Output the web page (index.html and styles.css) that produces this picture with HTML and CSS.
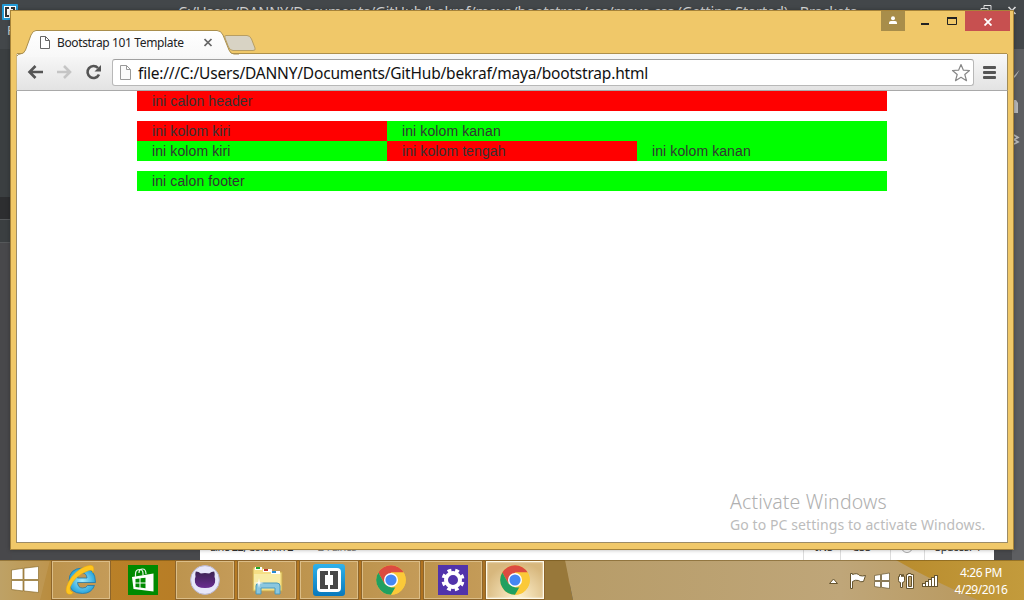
FILE: index.html
```html
<!DOCTYPE html>
<html lang="en">
<head>
<meta charset="utf-8">
<title>Bootstrap 101 Template</title>
<link rel="stylesheet" href="styles.css">
</head>
<body>
<div class="desktop">
  <section class="editor">
    <header class="editor-head">
      <svg class="editor-logo" width="16" height="16" viewBox="0 0 16 16"><rect width="16" height="16" rx="1" fill="#239bd8"/><rect x="2" y="2" width="12" height="12" fill="#fff"/><path d="M7 4H4v8h3M9 4h3v8H9" fill="none" stroke="#333" stroke-width="2"/></svg>
      <span class="editor-title">C:/Users/DANNY/Documents/GitHub/bekraf/maya/bootstrap/css/maya.css (Getting Started) - Brackets</span>
      <svg class="editor-controls" width="40" height="16" viewBox="0 0 40 16" fill="none" stroke="#e4e4e4"><path d="M4 9V5.500h7V12M1 8.500h7V14H1z"/><path d="M28.500 7l7 7m0-7l-7 7" stroke-width="1.600"/></svg>
      <span class="editor-menu">File</span>
    </header>
    <aside class="editor-side"><div class="side-selected"></div><div class="side-row"></div></aside>
    <aside class="editor-tools">
      <svg width="12" height="110" viewBox="0 0 12 110"><path d="M2 27l5.500-6-3.500 6-2 2" fill="#b6b7b8"/><path d="M2 51h2l2 3v10H2z" fill="#b6b7b8"/><path d="M2 86l4 2.500-4 2 4 2.500-4 2" fill="none" stroke="#b6b7b8" stroke-width="1.600"/></svg>
    </aside>
    <footer class="editor-status"><span class="cursor-pos">Line 22, Column 2</span><span class="lines">— 24 Lines</span><span class="st ins">INS</span><span class="st css">CSS</span><span class="st lint"><i></i></span><span class="st spaces">Spaces: 4</span></footer>
  </section>

  <section class="browser">
    <header class="titlebar">
      <div class="tab">
        <svg class="tab-shape" width="245" height="27" viewBox="0 0 245 27"><defs><linearGradient id="tg" x2="0" y2="1"><stop stop-color="#fff"/><stop offset="1" stop-color="#f8f8f8"/></linearGradient></defs><path d="M0 27v-1Q1 24 3 24 7 24 8.500 20L14 5Q16 .5 19 .5H200Q204 .5 206 5L212 20Q213.500 24 217 24H222V27z" fill="url(#tg)"/><path d="M0 26Q1 24 3 24 7 24 8.500 20L14 5Q16 .5 19 .5H200Q204 .5 206 5L212 20Q213.500 24 217 24H222" fill="none" stroke="#a98e4d"/><path d="M209 5.500H230Q233 5.500 234.500 9L238 18Q239 20.500 236 20.500H216Q213 20.500 211.500 17L208 8Q207 5.500 209 5.500z" fill="#d8d3c4" stroke="#b79e63"/></svg>
        <div class="tab-label">
          <svg width="12" height="15" viewBox="0 0 12 15" fill="#fff" stroke="#666"><path d="M1.500 1.500h5l4 4v8h-9zM6.500 1.500v4h4"/></svg>
          <span class="tab-title">Bootstrap 101 Template</span>
          <svg class="tab-close" width="9" height="9" viewBox="0 0 9 9"><path d="M.5 1l7 7m0-7l-7 7" stroke="#666" stroke-width="1.700"/></svg>
        </div>
      </div>
      <div class="window-controls">
        <span class="user"><svg width="8" height="9" viewBox="0 0 8 9" fill="#fff"><circle cx="4" cy="2.200" r="2"/><path d="M0 8V7q0-2 2-2h4q2 0 2 2v1z"/></svg></span>
        <svg class="minmax" width="60" height="20" viewBox="0 0 60 20"><path d="M16 12h8v2h-8z" fill="#222"/><path d="M42.500 6.500h9v7h-9z" fill="none" stroke="#222"/><path d="M42 6h10v2H42z" fill="#222"/></svg>
        <span class="close"><svg width="8" height="8" viewBox="0 0 8 8"><path d="M.5.500l7 7m0-7l-7 7" stroke="#fff" stroke-width="1.800"/></svg></span>
      </div>
    </header>
    <nav class="toolbar">
      <svg class="nav" width="94" height="36" viewBox="0 0 94 36" fill="none" stroke-width="2.600"><path d="M26 18H13M18.500 12l-6 6 6 6" stroke="#555"/><path d="M40 18h12M47 12l6 6-6 6" stroke="#c5c5c5"/><path d="M82 20.500a6 6 0 1 1-1-6.500" stroke="#555"/><path d="M84 11v6.500h-6.500z" fill="#555"/></svg>
      <div class="address">
        <svg width="12" height="15" viewBox="0 0 12 15" fill="#fafafa" stroke="#999"><path d="M1.500.5h6l4 4v10h-10zM7.500.5v4h4"/></svg>
        <span class="url">file:///C:/Users/DANNY/Documents/GitHub/bekraf/maya/bootstrap.html</span>
        <svg class="star" width="20" height="20" viewBox="0 0 20 20"><path d="M10 1.500l2.400 5.700 6.100.3-4.700 4 1.700 6.200L10 14.300l-5.500 3.400 1.700-6.200-4.700-4 6.100-.3z" fill="#fff" stroke="#888" stroke-width="1.200" stroke-linejoin="round"/></svg>
      </div>
      <svg class="burger" width="13" height="13" viewBox="0 0 13 13" fill="#555"><rect width="13" height="3" rx="1"/><rect y="5" width="13" height="3" rx="1"/><rect y="10" width="13" height="3" rx="1"/></svg>
    </nav>
    <main class="page">
      <div class="container">
        <div class="cell red gap">ini calon header</div>
        <div class="row two"><div class="cell red">ini kolom kiri</div><div class="cell green">ini kolom kanan</div></div>
        <div class="row three gap"><div class="cell green">ini kolom kiri</div><div class="cell red">ini kolom tengah</div><div class="cell green">ini kolom kanan</div></div>
        <div class="cell green">ini calon footer</div>
      </div>
    </main>
  </section>

  <aside class="activate"><div class="activate-title">Activate Windows</div><div class="activate-sub">Go to PC settings to activate Windows.</div></aside>

  <footer class="taskbar">
    <svg class="wallpaper" width="1024" height="40" viewBox="0 0 1024 40"><defs><linearGradient id="w1"><stop stop-color="#b99a59"/><stop offset=".08" stop-color="#b98e42"/><stop offset=".16" stop-color="#ba8128"/><stop offset=".8" stop-color="#b0711f"/><stop offset="1" stop-color="#98783a"/></linearGradient><linearGradient id="w2"><stop stop-color="#b79c68"/><stop offset=".6" stop-color="#bfa679"/><stop offset="1" stop-color="#b79556"/></linearGradient><linearGradient id="w3"><stop stop-color="#b98c2e"/><stop offset="1" stop-color="#c39b3c"/></linearGradient></defs><path d="M0 0h570v40H0z" fill="url(#w1)"/><path d="M0 0h50L40 40H0z" fill="#fff" opacity=".08"/><path d="M545 0h20l8 40h-28z" fill="#98783a"/><path d="M565 0h459v40H573z" fill="url(#w2)"/><path d="M896 0h128v40h-46Q930 20 896 0z" fill="url(#w3)"/><path d="M0 .5h1024" stroke="#6b4d13" opacity=".5"/></svg>
    <div class="start"><svg width="28" height="28" viewBox="0 0 28 28" fill="#fff" stroke="#8d6e2e" stroke-width=".7"><path d="M.5 4L12 2.300v11.200H.5zM13 2.200L27.500.5v13H13zM.5 14.500H12V25L.5 23.500zM13 14.500h14.500v12L13 25z"/></svg></div>
    <div class="apps">
      <div class="app"><svg width="32" height="32" viewBox="0 0 32 32"><defs><radialGradient id="ie"><stop stop-color="#a8edff"/><stop offset="1" stop-color="#2aa5db"/></radialGradient></defs><path d="M30.500 18.500H12.500q.5 5.500 5 5.500 4 0 5-2.500h7q-3 8-12 8Q4 29.500 4 17T17.500 4q13 0 13 14.500zM12.500 14H22q-.5-5-4.800-5-4.200 0-4.700 5z" fill="url(#ie)" stroke="#2377a7" stroke-width=".8"/><path d="M7 30Q-.5 32 1.500 23 5 11.500 16 4.500 27-1 28.500 3q.8 2-.5 6 0-4.500-6.500-1.500Q10 12 5.500 22.500q-1.500 5 2.500 5.500z" fill="#ffc51e" stroke="#e5a40b" stroke-width=".5"/></svg></div>
      <div class="app plain"><svg width="30" height="30" viewBox="0 0 30 30"><path d="M0 0h30v30H0z" fill="#008a00"/><path d="M4 12L25.500 8.500v18L5.500 24z" fill="#fff"/><path d="M7.500 12V9q0-4.500 4-4.500 3.500 0 3.500 4v2M11 8q0-4 3.500-4Q18 4 18 9" fill="none" stroke="#e8f5e8" stroke-width="1.200"/><path d="M7.500 14l4-.5v4h-4zM12.500 13.300l5-.6v4.800h-5zM7.500 18.500h4v4l-4-.5zM12.500 18.500h5v4.800l-5-.7z" fill="#008a00"/></svg></div>
      <div class="app"><svg width="30" height="30" viewBox="0 0 30 30"><defs><linearGradient id="cat" x2="0" y2="1"><stop stop-color="#3b2352"/><stop offset="1" stop-color="#6a2c91"/></linearGradient></defs><circle cx="15" cy="15" r="14.400" fill="#e7e7fa" stroke="#b9b6cf"/><path d="M5.800 6.500q3 .2 5 2 4.200-.9 8.400 0 2-1.800 5-2 1 2.800.3 5.300 1.200 2.200.5 5.700Q23.700 23 15 23T5 17.500q-.7-3.500.5-5.700-.7-2.500.3-5.300z" fill="url(#cat)"/></svg></div>
      <div class="app"><svg width="32" height="30" viewBox="0 0 32 30"><path d="M2 4q0-2 2-2h7l2 3h7l2 2h9v19H2z" fill="#f5df85" stroke="#c9a94c"/><path d="M3 9h26v15H3z" fill="#f8eca5"/><path d="M4 2h7v3H4z" fill="#fff"/><path d="M5 2h4v2H5z" fill="#20a62b"/><path d="M12 4h9v3h-9z" fill="#fff"/><path d="M13 4h4v2h-4z" fill="#bd3428"/><path d="M20 6h9v3h-9z" fill="#fff"/><path d="M21 6h4v2h-4z" fill="#268cd2"/><path d="M5 29V21q0-3 3-3h18q3 0 3 3v8h-5v-6H10v6z" fill="#8bc7df" stroke="#4b9abc"/><path d="M8 13l.8 4.200 4.200.8-4.200.8L8 23l-.8-4.200L3 18l4.200-.8z" fill="#fff"/></svg></div>
      <div class="app"><svg width="32" height="32" viewBox="0 0 32 32"><defs><linearGradient id="br" x2="0" y2="1"><stop stop-color="#30b2eb"/><stop offset="1" stop-color="#0878bb"/></linearGradient></defs><rect width="32" height="32" rx="3" fill="url(#br)"/><rect x="4" y="4" width="24" height="24" rx="4" fill="#fff"/><path d="M7 7h8v4h-3v10h3v4H7zM17 7h8v18h-8v-4h3V11h-3z" fill="#484848"/></svg></div>
      <div class="app"><svg width="30" height="30" viewBox="0 0 30 30"><g id="chrome"><circle cx="15" cy="15" r="14.700" fill="#fbc939"/><path d="M2.300 7.600A14.700 14.700 0 0 1 27.700 7.600H15L8.600 18.700z" fill="#dc4b40"/><path d="M2.300 7.600L8.600 18.700 15 22.400h6.400L15 29.700A14.700 14.700 0 0 1 2.300 7.600z" fill="#20a060"/><path d="M21.400 18.700L15 29.700A14.700 14.700 0 0 0 27.700 7.600H15z" fill="#fbc939"/><circle cx="15" cy="15" r="7" fill="#fff"/><circle cx="15" cy="15" r="5.600" fill="#4587f3"/></g></svg></div>
      <div class="app"><svg width="30" height="30" viewBox="0 0 30 30"><path d="M0 0h30v30H0z" fill="#5133ab"/><circle cx="15" cy="15" r="7" fill="none" stroke="#fff" stroke-width="4"/><circle cx="15" cy="15" r="9.800" fill="none" stroke="#fff" stroke-width="3.400" stroke-dasharray="3.850 3.850" stroke-dashoffset="-1.900"/></svg></div>
      <div class="app active"><svg width="30" height="30" viewBox="0 0 30 30"><use href="#chrome"/></svg></div>
    </div>
    <div class="tray">
      <svg width="112" height="20" viewBox="0 0 112 20" fill="#fff" stroke="#65542e"><path d="M.5 12.500L4.500 8l4 4.500z"/><path d="M21.500 2.500h2v1q5-2 7 1 3 1 6 0l-2 6q-3 1-5-1-3-1-6 1v7h-2z"/><path d="M45.500 4.500l6-1v6h-6zM52.500 3.300l8-1.300v7.500h-8zM45.500 10.500h6v6l-6-1zM52.500 10.500h8v7l-8-1.200z" stroke-width=".7"/><path d="M70.500 3.500v2h-1v4q0 2 2 2v5h2v-5q2 0 2-2v-4h-1v-2h-1v2h-1v-2zM77.500 3.500h1.500v-1h3v1h2.500v14h-7zM79.500 5.500v10h3v-10z" fill-rule="evenodd"/><path d="M93 12h3v-2h3V8h3V6h3V4h4v12H93z" fill="#65542e" stroke="none"/><path d="M94 13h2v2h-2zM97 11h2v4h-2zM100 9h2v6h-2zM103 7h2v8h-2zM106 5h2v10h-2z" stroke="none"/></svg>
    </div>
    <div class="clock"><span>4:26 PM</span><span class="date">4/29/2016</span></div>
  </footer>
</div>
</body>
</html>
```
FILE: styles.css
```css
* { box-sizing: border-box; }
body { margin: 0; overflow: hidden; font-family: "Noto Sans", "Open Sans", sans-serif; }
svg { display: block; flex: none; }
.desktop { position: relative; width: 1024px; height: 600px; overflow: hidden; background: #4a4b4e; }

.editor { position: absolute; inset: 0 0 40px; background: #48494c; }
.editor-head { position: relative; height: 49px; background: #43474a; color: #d7d7d7; }
.editor-logo { position: absolute; left: 2px; top: 4px; }
.editor-title { position: absolute; left: 178px; top: 0; font-size: 14.5px; line-height: 22px; white-space: nowrap; letter-spacing: -0.16px; }
.editor-controls { position: absolute; left: 980px; top: 0; }
.editor-menu { position: absolute; left: 7px; top: 21px; font-size: 13px; }
.editor-side { position: absolute; left: 0; top: 49px; bottom: 0; width: 12px; padding-top: 148px; background: linear-gradient(#3b3f41 0 193px, #48484b 193px); }
.side-selected { height: 22px; background: #2d2e30; }
.side-row { height: 24px; background: #3b3f41; border-top: 1px solid #55585a; border-bottom: 1px solid #55585a; }
.editor-tools { position: absolute; left: 1012px; top: 49px; width: 12px; height: 511px; background: #5d5e61; }
.editor-status { position: absolute; left: 200px; top: 538px; width: 794px; height: 22px; display: flex; align-items: flex-start; background: #fff; color: #333; font-size: 11px; line-height: 18px; }
.cursor-pos { width: 105px; padding-left: 10px; letter-spacing: -0.55px; }
.lines { width: 498px; color: #888; letter-spacing: -0.5px; }
.st { height: 22px; border-left: 1px solid #ddd; padding-left: 11px; }
.ins { width: 37px; }
.css { width: 50px; }
.lint { width: 34px; padding-left: 10px; }
.lint i { display: block; width: 12px; height: 12px; margin-top: 3px; border: 1px solid #aaa; border-radius: 50%; }
.spaces { width: 70px; white-space: nowrap; padding-left: 10px; letter-spacing: -0.3px; }

.browser { position: absolute; left: 10px; top: 10px; width: 1004px; height: 540px; padding: 0 6px 6px; display: flex; flex-direction: column; border: 1px solid #a68339; background: #f0c869; box-shadow: 0 0 4px rgba(0,0,0,.3); }
.titlebar { height: 43px; flex: none; display: flex; justify-content: space-between; border-bottom: 1px solid #ae904c; }
.tab { position: relative; width: 245px; padding-top: 19px; z-index: 1; }
.tab-shape { position: absolute; left: 0; top: 19px; }
.tab-label { position: relative; height: 25px; display: flex; align-items: center; padding-left: 22px; }
.tab-title { width: 145px; margin-left: 6px; font-size: 12px; line-height: 17px; letter-spacing: -0.36px; white-space: nowrap; color: #222; }
.tab-close { margin-left: 2px; }
.window-controls { display: flex; height: 20px; margin-right: -3px; }
.user { width: 24px; background: #a88d4a; padding: 5px 8px; }
.close { width: 45px; background: #c75050; padding: 7px 18px 7px 19px; }
.toolbar { height: 37px; flex: none; display: flex; margin: 0 -1px; border: 1px solid #a9a9a9; border-top: 0; background: linear-gradient(#f8f8f8, #e3e3e3); border-left-color: #cfb67b; border-right-color: #a08b58; }
.address { width: 862px; height: 27px; margin: 5px 9px 0 1px; padding: 0 2px 0 6px; display: flex; align-items: center; border: 1px solid #b8b8b8; border-top-color: #a0a0a0; border-radius: 3px; background: #fff; }
.url { flex: 1; margin-left: 7px; font-size: 15.5px; line-height: 24px; white-space: nowrap; color: #111; letter-spacing: -0.195px; }
.burger { margin-top: 12px; }
.page { flex: 1; margin: 0 -1px; border: 1px solid #9b8b67; border-top: 0; background: #fff; }
.container { width: 750px; margin-left: 120px; color: #333; font: 14px/20px "Liberation Sans", Arial, sans-serif; letter-spacing: 0.1px; }
.row { display: grid; }
.two { grid-template-columns: 1fr 2fr; }
.three { grid-template-columns: 1fr 1fr 1fr; }
.gap { margin-bottom: 10px; }
.cell { height: 20px; padding-left: 15px; }
.red { background: #f00; }
.green { background: #0f0; }

.activate { position: absolute; left: 730px; top: 489px; color: #bcbcbc; white-space: nowrap; }
.activate-title { font-size: 19.5px; line-height: 26px; font-weight: 300; letter-spacing: 0.15px; color: #b0b0b0; }
.activate-sub { font-size: 14px; line-height: 20px; letter-spacing: 0.09px; }

.taskbar { position: absolute; left: 0; top: 560px; width: 1024px; height: 40px; display: flex; color: #fff; }
.wallpaper { position: absolute; inset: 0; }
.start { position: relative; width: 52px; padding: 6px 0 0 11px; }
.apps { position: relative; width: 495px; display: flex; gap: 4px; padding-top: 1px; }
.app { flex: none; width: 58px; height: 38px; display: flex; align-items: center; justify-content: center; border: 1px solid #dbbd87; outline: 1px solid #8d652b; background: linear-gradient(90deg, #bd944e, #c49b58); }
.plain { border-color: transparent; outline: 0; background: none; }
.active { border: 1px solid #fffbea; background: radial-gradient(circle at 55% 100%, #fff2ce, #d7b77d 75%); box-shadow: inset 0 0 2px #fff; }
.tray { position: relative; width: 405px; padding: 11px 0 0 282px; }
.clock { position: relative; width: 58px; display: flex; flex-direction: column; align-items: center; padding-top: 4px; font-size: 12px; line-height: 17px; white-space: nowrap; letter-spacing: -0.45px; }
```
